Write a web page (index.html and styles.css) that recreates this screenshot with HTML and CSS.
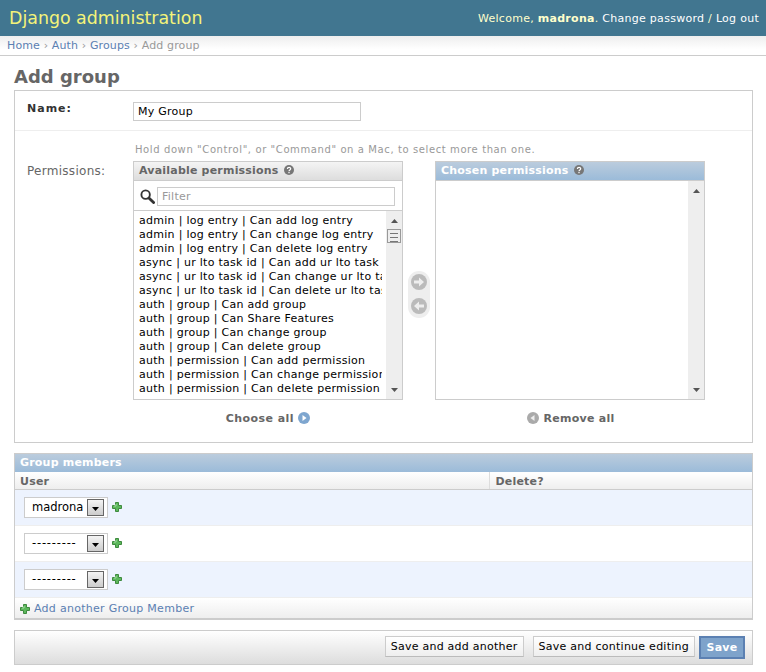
FILE: index.html
```html
<!DOCTYPE html>
<html lang="en">

<head>
    <meta charset="UTF-8">
    <meta name="viewport" content="width=device-width, initial-scale=1.0">
    <title>Add group | Django site admin</title>
    <link rel="stylesheet" href="styles.css">
</head>

<body>
    <svg class="defs" width="0" height="0">
        <symbol id="plus" viewBox="0 0 10 10">
            <path d="M3.5.5h3v3h3v3h-3v3h-3v-3h-3v-3h3z" fill="#5cb85c" stroke="#3f8a3f" stroke-width="1" />
            <path d="M4 2v2H2" fill="none" stroke="#a5dba5" stroke-width="1" />
        </symbol>
        <symbol id="help" viewBox="0 0 10 10">
            <circle cx="5" cy="5" r="5" fill="#777" />
            <path d="M3.4 3.9c0-2 3.3-2 3.3-.1 0 1.200-1.700 1.200-1.700 2.500" fill="none" stroke="#fff" stroke-width="1.200" />
            <rect x="4.400" y="7" width="1.200" height="1.200" fill="#fff" />
        </symbol>
        <symbol id="caret" viewBox="0 0 9 5">
            <path d="M0 0h9L4.500 5z" />
        </symbol>
    </svg>

    <div class="header">
        <div class="branding">Django administration</div>
        <div class="user-tools">Welcome, <strong>madrona</strong>. <a href="#">Change password</a> / <a href="#">Log out</a></div>
    </div>
    <div class="breadcrumbs">
        <a href="#">Home</a> › <a href="#">Auth</a> › <a href="#">Groups</a> › Add group
    </div>

    <div class="content">
        <h1>Add group</h1>
        <form>
            <div class="module">
                <div class="name-row">
                    <label class="required" for="id_name">Name:</label>
                    <input class="name-input" id="id_name" type="text" value="My Group">
                </div>
                <div class="perm-row">
                    <div class="perm-label">Permissions:</div>
                    <div class="perm-field">
                        <p class="help">Hold down "Control", or "Command" on a Mac, to select more than one.</p>
                        <div class="selector">
                            <div class="selector-col">
                                <div class="selector-box">
                                    <h2 class="avail-title">Available permissions <svg class="help-icon"><use href="#help" /></svg></h2>
                                    <div class="filter">
                                        <svg class="search-icon" viewBox="0 0 16 16">
                                            <circle cx="6" cy="6" r="4.500" fill="#fff" stroke="#333" stroke-width="2" />
                                            <path d="M9.500 9.500l5 5" stroke="#333" stroke-width="3" stroke-linecap="round" />
                                        </svg>
                                        <input class="filter-input" type="text" placeholder="Filter">
                                    </div>
                                    <div class="listbox short">
                                        <ul class="options">
                                            <li>admin | log entry | Can add log entry</li>
                                            <li>admin | log entry | Can change log entry</li>
                                            <li>admin | log entry | Can delete log entry</li>
                                            <li>async | ur lto task id | Can add ur lto task id</li>
                                            <li>async | ur lto task id | Can change ur lto task id</li>
                                            <li>async | ur lto task id | Can delete ur lto task id</li>
                                            <li>auth | group | Can add group</li>
                                            <li>auth | group | Can Share Features</li>
                                            <li>auth | group | Can change group</li>
                                            <li>auth | group | Can delete group</li>
                                            <li>auth | permission | Can add permission</li>
                                            <li>auth | permission | Can change permission</li>
                                            <li>auth | permission | Can delete permission</li>
                                        </ul>
                                        <div class="scrollbar">
                                            <svg class="scroll-up"><use href="#caret" /></svg>
                                            <div class="thumb"></div>
                                            <svg class="scroll-down"><use href="#caret" /></svg>
                                        </div>
                                    </div>
                                </div>
                                <a class="choose-link choose-all" href="#">Choose all
                                    <svg class="round-icon" viewBox="0 0 12 12">
                                        <circle cx="6" cy="6" r="6" fill="#7ea6cf" />
                                        <path d="M4.500 3l4 3-4 3z" fill="#fff" />
                                    </svg>
                                </a>
                            </div>
                            <div class="chooser">
                                <svg class="move-icon" viewBox="0 0 16 16">
                                    <circle cx="8" cy="8" r="8" fill="#bbb" />
                                    <path d="M3 6.500h5V3.500l5 4.500-5 4.500V9.500H3z" fill="#eee" />
                                </svg>
                                <svg class="move-icon" viewBox="0 0 16 16">
                                    <circle cx="8" cy="8" r="8" fill="#bbb" />
                                    <path d="M13 6.500H8V3.500L3 8l5 4.500V9.500h5z" fill="#eee" />
                                </svg>
                            </div>
                            <div class="selector-col">
                                <div class="selector-box">
                                    <h2 class="chosen-title">Chosen permissions <svg class="help-icon"><use href="#help" /></svg></h2>
                                    <div class="listbox tall">
                                        <ul class="options"></ul>
                                        <div class="scrollbar">
                                            <svg class="scroll-up"><use href="#caret" /></svg>
                                            <svg class="scroll-down"><use href="#caret" /></svg>
                                        </div>
                                    </div>
                                </div>
                                <a class="choose-link remove-all" href="#">
                                    <svg class="round-icon" viewBox="0 0 12 12">
                                        <circle cx="6" cy="6" r="6" fill="#aaa" />
                                        <path d="M7.500 3l-4 3 4 3z" fill="#eee" />
                                    </svg>
                                    Remove all
                                </a>
                            </div>
                        </div>
                    </div>
                </div>
            </div>

            <div class="module inline-group">
                <h2 class="group-title">Group members</h2>
                <table class="members">
                    <thead>
                        <tr>
                            <th class="user-col">User</th>
                            <th class="delete-col">Delete?</th>
                        </tr>
                    </thead>
                    <tbody>
                        <tr class="row1">
                            <td>
                                <div class="user-field">
                                    <div class="fake-select">madrona<span class="drop"><svg><use href="#caret" /></svg></span></div>
                                    <svg class="plus-icon"><use href="#plus" /></svg>
                                </div>
                            </td>
                            <td></td>
                        </tr>
                        <tr class="row2">
                            <td>
                                <div class="user-field">
                                    <div class="fake-select blank">---------<span class="drop"><svg><use href="#caret" /></svg></span></div>
                                    <svg class="plus-icon"><use href="#plus" /></svg>
                                </div>
                            </td>
                            <td></td>
                        </tr>
                        <tr class="row1">
                            <td>
                                <div class="user-field">
                                    <div class="fake-select blank">---------<span class="drop"><svg><use href="#caret" /></svg></span></div>
                                    <svg class="plus-icon"><use href="#plus" /></svg>
                                </div>
                            </td>
                            <td></td>
                        </tr>
                    </tbody>
                </table>
                <div class="add-row">
                    <svg class="plus-icon"><use href="#plus" /></svg>
                    <a href="#">Add another Group Member</a>
                </div>
            </div>

            <div class="submit-row">
                <button class="btn" type="button">Save and add another</button>
                <button class="btn" type="button">Save and continue editing</button>
                <button class="btn default" type="button">Save</button>
            </div>
        </form>
    </div>
</body>

</html>
```

FILE: styles.css
```css
html,
body {
    margin: 0;
    padding: 0;
}

body {
    font-family: 'DejaVu Sans', 'Liberation Sans', sans-serif;
    font-size: 11px;
    letter-spacing: 0.28px;
    color: #333;
    background: #fff;
    overflow: hidden;
}

a {
    color: #5b80b2;
    text-decoration: none;
}

.defs {
    position: absolute;
}

.header {
    display: flex;
    justify-content: space-between;
    align-items: center;
    height: 36px;
    padding: 0 7px 0 9px;
    background: #417690;
    color: #ffc;
}

.branding {
    font-size: 17.4px;
    letter-spacing: 0;
    color: #f4f379;
}

.user-tools a {
    color: #fff;
}

.breadcrumbs {
    height: 20px;
    line-height: 19px;
    padding-left: 7px;
    box-sizing: border-box;
    letter-spacing: 0.13px;
    border-bottom: 1px solid #ccc;
    background: linear-gradient(#eee, #fff 70%);
    color: #999;
}

.content {
    padding: 0 13px 0 14px;
}

h1 {
    margin: 9px 0 1px;
    font-size: 18px;
    line-height: 24px;
    letter-spacing: 0;
    color: #666;
}

.module {
    border: 1px solid #ccc;
    margin-bottom: 10px;
}

.name-row {
    display: flex;
    align-items: flex-start;
    height: 40px;
    box-sizing: border-box;
    padding: 10px 12px;
    border-bottom: 1px solid #eee;
}

.name-row label {
    width: 106px;
    font-weight: bold;
    line-height: 15px;
    letter-spacing: 1px;
}

.name-input {
    width: 228px;
    height: 19px;
    margin-top: 1px;
    box-sizing: border-box;
    padding: 0 4px;
    border: 1px solid #ccc;
    font: 11px 'DejaVu Sans', sans-serif;
    letter-spacing: 0.25px;
    color: #000;
}

.perm-row {
    display: flex;
    padding: 12px 12px 0;
    height: 311px;
    box-sizing: border-box;
}

.perm-label {
    width: 106px;
    padding-top: 21px;
    font-size: 12px;
    color: #666;
}

.help {
    margin: 0 0 4px 2px;
    font-size: 10px;
    line-height: 14px;
    letter-spacing: 0.6px;
    color: #999;
}

.selector {
    display: flex;
}

.selector-col {
    width: 270px;
    display: flex;
    flex-direction: column;
}

.selector-box {
    border: 1px solid #ccc;
    height: 239px;
    box-sizing: border-box;
    display: flex;
    flex-direction: column;
}

.selector-box h2 {
    margin: 0;
    height: 18px;
    line-height: 18px;
    padding-left: 5px;
    font-size: 11px;
    font-weight: bold;
    letter-spacing: 0.2px;
}

.avail-title {
    background: linear-gradient(#f4f4f4, #ddd);
    color: #666;
    border-bottom: 1px solid #ccc;
}

.chosen-title {
    background: linear-gradient(#bcd, #9bbbd9);
    color: #fff;
    border-bottom: 1px solid #ccc;
}

.help-icon {
    width: 10px;
    height: 10px;
    vertical-align: -1px;
    margin-left: 1px;
}

.filter {
    display: flex;
    align-items: center;
    gap: 2px;
    height: 30px;
    padding: 2px 0 0 6px;
    border-bottom: 1px solid #ccc;
    box-sizing: border-box;
}

.search-icon {
    width: 15px;
    height: 15px;
    flex: none;
}

.filter-input {
    width: 238px;
    height: 19px;
    box-sizing: border-box;
    padding: 0 4px;
    border: 1px solid #ccc;
    font: 11px 'DejaVu Sans', sans-serif;
    letter-spacing: 0.25px;
}

.filter-input::placeholder {
    color: #999;
}

.listbox {
    flex: 1;
    display: flex;
    min-height: 0;
}

.options {
    flex: 1;
    min-width: 0;
    margin: 0 4px 0 0;
    padding: 3px 0 0 5px;
    list-style: none;
    color: #000;
    overflow: hidden;
    line-height: 14px;
    white-space: nowrap;
}

.scrollbar {
    width: 16px;
    flex: none;
    background: #eee;
    display: flex;
    flex-direction: column;
    align-items: center;
}

.scroll-up,
.scroll-down {
    width: 7px;
    height: 4px;
    fill: #555;
}

.scroll-up {
    transform: rotate(180deg);
    margin-top: 8px;
}

.scroll-down {
    margin-top: auto;
    margin-bottom: 7px;
}

.thumb {
    width: 14px;
    height: 14px;
    margin-top: 6px;
    box-sizing: border-box;
    border: 1px solid #999;
    background: repeating-linear-gradient(#eee 0 3px, #777 3px 4px);
    background-size: 8px 12px;
    background-repeat: no-repeat;
    background-position: center;
    background-color: #eee;
}

.choose-link {
    display: block;
    text-align: center;
    margin-top: 12px;
    font-weight: bold;
    color: #666;
    line-height: 14px;
}

.choose-all {
    letter-spacing: 0.45px;
}

.remove-all {
    padding-left: 2px;
}

.round-icon {
    width: 12px;
    height: 12px;
    vertical-align: -2px;
}

.chooser {
    width: 22px;
    height: 47px;
    margin: 110px 5px 0;
    flex: none;
    box-sizing: border-box;
    padding: 3px 0;
    display: flex;
    flex-direction: column;
    gap: 8px;
    align-items: center;
    background: #eee;
    border-radius: 11px;
}

.move-icon {
    width: 16px;
    height: 16px;
    flex: none;
}

.inline-group {
    border-bottom-width: 2px;
}

.group-title {
    margin: 0;
    height: 18px;
    line-height: 17px;
    padding-left: 5px;
    font-size: 11px;
    font-weight: bold;
    letter-spacing: 0.2px;
    color: #fff;
    background: linear-gradient(#bcd, #9bbbd9);
}

.members {
    width: 100%;
    border-collapse: collapse;
}

.members th {
    height: 17px;
    padding: 2px 5px 0;
    box-sizing: border-box;
    text-align: left;
    font-size: 11px;
    letter-spacing: 0.2px;
    color: #666;
    background: linear-gradient(#fff, #eee);
    border-bottom: 1px solid #ccc;
}

.user-col {
    width: 474px;
    border-right: 1px solid #ddd;
}

.members .delete-col {
    padding-left: 6px;
}

.members td {
    height: 36px;
    padding: 0 0 0 9px;
    box-sizing: border-box;
    border-bottom: 1px solid #eee;
}

.row1 td {
    background: #edf3fe;
}

.row2 td {
    background: #fff;
}

.user-field {
    display: flex;
    align-items: center;
    gap: 4px;
}

.fake-select {
    width: 84px;
    height: 21px;
    box-sizing: border-box;
    border: 1px solid #ccc;
    background: #fff;
    padding-left: 7px;
    display: flex;
    align-items: center;
    justify-content: space-between;
    font-size: 11.5px;
    letter-spacing: 0;
    color: #000;
}

.fake-select.blank {
    letter-spacing: 0.8px;
}

.drop {
    width: 17px;
    height: 17px;
    box-sizing: border-box;
    margin-right: 3px;
    border: 1px solid #666;
    background: linear-gradient(#f4f4f4, #ccc);
    display: flex;
    align-items: center;
    justify-content: center;
}

.drop svg {
    width: 7px;
    height: 4px;
    margin-top: 3px;
    fill: #000;
}

.plus-icon {
    width: 10px;
    height: 10px;
    flex: none;
}

.add-row {
    display: flex;
    align-items: center;
    gap: 4px;
    height: 20px;
    box-sizing: border-box;
    padding: 2px 0 0 5px;
    background: linear-gradient(#fff, #eee);
}

.submit-row {
    display: flex;
    justify-content: flex-end;
    align-items: flex-start;
    gap: 9px;
    height: 35px;
    box-sizing: border-box;
    padding: 5px 7px 0 0;
    border: 1px solid #ccc;
    background: linear-gradient(#fff, #ddd);
}

.btn {
    height: 21px;
    padding: 1px 5px 0;
    border: 1px solid #ccc;
    border-bottom-color: #bbb;
    background: linear-gradient(#fff, #eee);
    font: 11px 'DejaVu Sans', sans-serif;
    letter-spacing: 0.25px;
    color: #000;
}

.btn.default {
    width: 46px;
    height: 23px;
    margin-left: -5px;
    padding: 0;
    border: 2px solid #5b80b2;
    background: #7ea3cb;
    color: #fff;
    font-weight: bold;
}
```
